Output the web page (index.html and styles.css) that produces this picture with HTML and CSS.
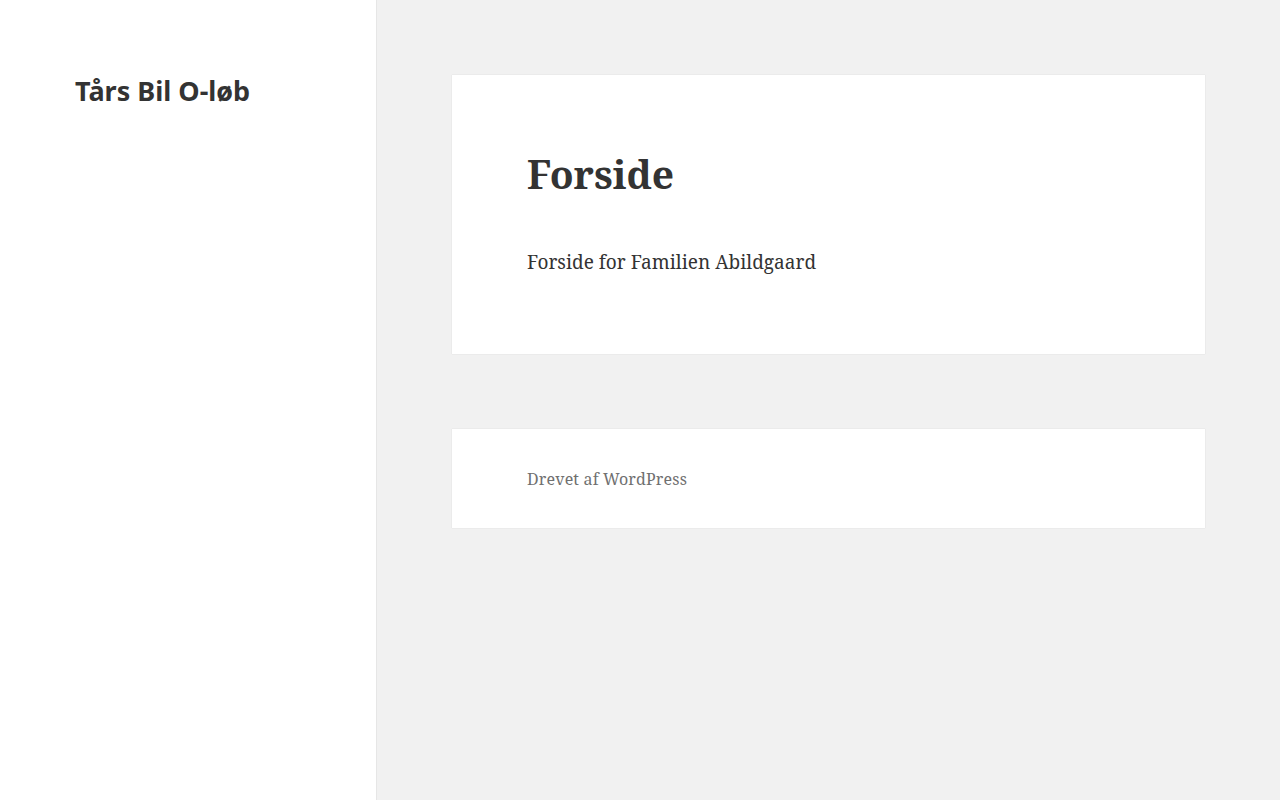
FILE: index.html
```html
<!DOCTYPE html>
<html lang="da">
  <head>
    <meta charset="UTF-8" />
    <meta name="viewport" content="width=device-width, initial-scale=1.0" />
    <title>Forside – Tårs Bil O-løb</title>
    <link rel="stylesheet" href="styles.css">
  </head>
  <body>
    <div class="page">
      <div class="sidebar">
        <header class="site-header">
          <p class="site-title">Tårs Bil O-løb</p>
        </header>
      </div>
      <div class="content">
        <article class="hentry">
          <h1 class="entry-title">Forside</h1>
          <div class="entry-content">
            <p>Forside for Familien Abildgaard</p>
          </div>
        </article>
        <footer class="site-footer">
          <a href="#">Drevet af WordPress</a>
        </footer>
      </div>
    </div>
  </body>
</html>
```

FILE: styles.css
```css
body {
  margin: 0;
  padding: 0;
  background-color: #f1f1f1;
  color: #333333;
  font-family: "Noto Serif", "DejaVu Serif", serif;
}
.page {
  display: flex;
  min-height: 100vh;
}
.sidebar {
  width: 376px;
  flex-shrink: 0;
  background-color: #ffffff;
  border-right: 1px solid #e6e6e6;
  .site-header {
    padding: 75px 75px 0;
  }
  .site-title {
    margin: 0;
    font-family: "Noto Sans", sans-serif;
    font-size: 27px;
    font-weight: 700;
    line-height: 1.1852;
    color: #333333;
  }
}
.content {
  flex: 1;
  padding: 75px 75px 75px 75px;
  display: flex;
  flex-direction: column;
  gap: 75px;
}
.hentry,
.site-footer {
  background-color: #ffffff;
  box-shadow: 0 0 1px rgba(0, 0, 0, 0.15);
}
.hentry {
  padding: 75px 75px;
  .entry-title {
    margin: 0 0 49px;
    font-size: 39px;
    font-weight: 700;
    line-height: 1.2308;
  }
  .entry-content p {
    margin: 0;
    font-size: 19px;
    line-height: 1.6842;
  }
}
.site-footer {
  padding: 38px 75px 37px;
  line-height: 24px;
  a {
    color: #707070;
    text-decoration: none;
    font-size: 16px;
    letter-spacing: 0.01em;
  }
}
```
